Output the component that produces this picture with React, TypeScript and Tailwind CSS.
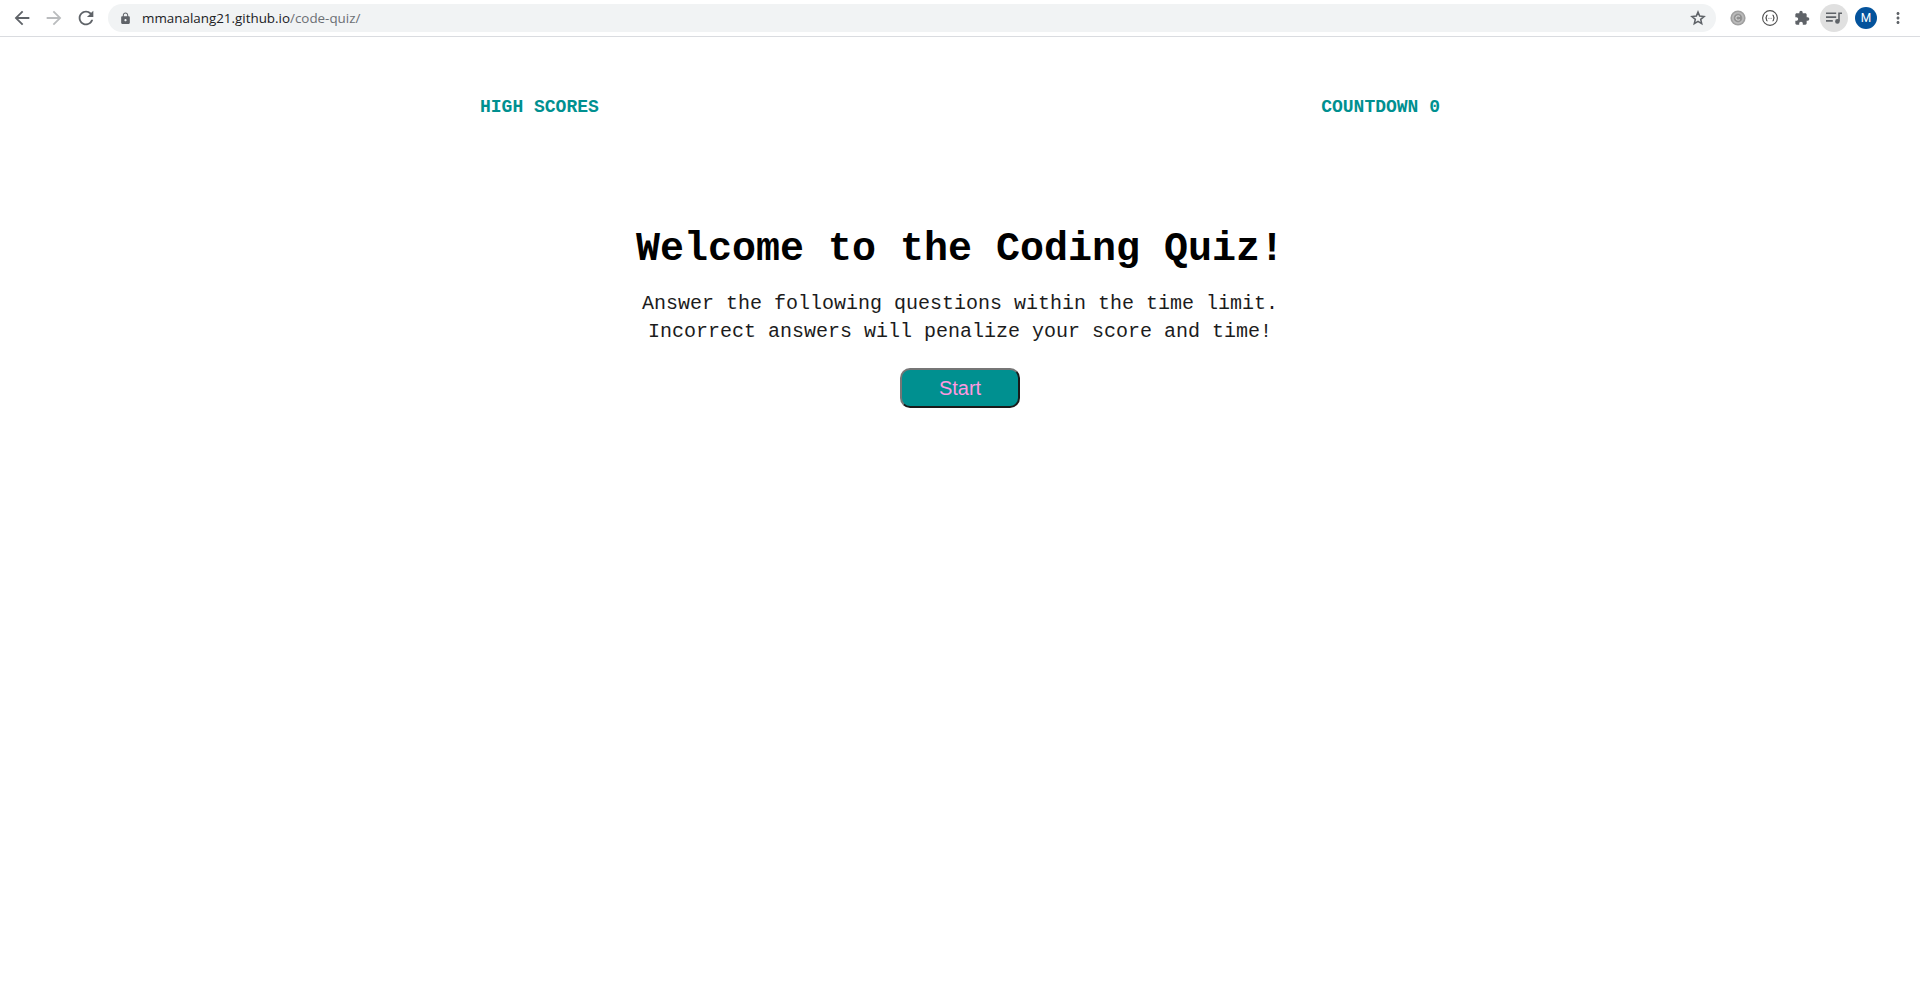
import {
  MdArrowBack,
  MdArrowForward,
  MdRefresh,
  MdLock,
  MdExtension,
  MdMoreVert,
} from "react-icons/md";

function Toolbar() {
  return (
    <div className="flex h-[37px] items-center border-b border-[#dadce0] bg-white pr-1.5 pl-1.5 text-[#5f6368]">
      <div className="flex w-8 justify-center"><MdArrowBack size={22} /></div>
      <div className="flex w-8 justify-center text-[#babcbe]"><MdArrowForward size={22} /></div>
      <div className="flex w-8 justify-center"><MdRefresh size={22} /></div>
      <div className="ml-1.5 flex h-7 flex-1 items-center rounded-full bg-[#f1f3f4] pr-[9px] pl-[11px]">
        <MdLock size={13} />
        <span className="ml-2.5 flex-1 font-['Open_Sans',sans-serif] text-[13.4px] leading-5 text-[#202124]">
          mmanalang21.github.io<span className="text-[#6b6f74]">/code-quiz/</span>
        </span>
        <svg width="18" height="18" viewBox="0 0 24 24" fill="none" stroke="currentColor" strokeWidth="2.1">
          <path d="M12 4.2L14.2 9.5L20 10L15.6 13.8L16.9 19.4L12 16.4L7.1 19.4L8.4 13.8L4 10L9.8 9.5Z" />
        </svg>
      </div>
      <div className="ml-1.5 flex w-8 justify-center">
        <svg width="16" height="16" viewBox="0 0 16 16" fill="none">
          <circle cx="8" cy="8" r="7.6" fill="#a0a0a0" />
          <circle cx="8" cy="8" r="5.2" stroke="#bcbcbc" strokeWidth="1.6" />
          <circle cx="8" cy="8" r="3.8" fill="#8f8f8f" />
          <path d="M9.8 6.6A2.2 2.2 0 1 0 9.8 9.4" stroke="#d0d0d0" strokeWidth="1.2" />
        </svg>
      </div>
      <div className="flex w-8 justify-center">
        <svg width="16" height="16" viewBox="0 0 16 16" fill="none" stroke="#505050">
          <circle cx="8" cy="8" r="7.4" strokeWidth="1.1" />
          <path d="M5.5 5.2Q4.5 5.2 4.5 6.3Q4.5 8 3.4 8Q4.5 8 4.5 9.7Q4.5 10.8 5.5 10.8M10.5 5.2Q11.5 5.2 11.5 6.3Q11.5 8 12.6 8Q11.5 8 11.5 9.7Q11.5 10.8 10.5 10.8" strokeWidth="1.2" />
          <path d="M6.3 8.4h.8M7.6 8.4h.8M8.9 8.4h.8" strokeWidth="0.7" />
        </svg>
      </div>
      <div className="flex w-8 justify-center"><MdExtension size={16} /></div>
      <div className="flex w-8 justify-center">
        <div className="flex size-7 items-center justify-center rounded-full bg-[#e0e0e0]">
          <svg width="16" height="12" viewBox="0 0 16 12" fill="none" stroke="currentColor" strokeWidth="1.6">
            <path d="M0 1.3H10.2M0 5.1H10.2M0 8.9H6.8M13 9.2V1.3H16" />
            <circle cx="11.4" cy="9.4" r="1.5" fill="currentColor" />
          </svg>
        </div>
      </div>
      <div className="flex w-8 justify-center">
        <div className="flex size-[22px] items-center justify-center rounded-full bg-[#04539c] font-[Roboto,sans-serif] text-xs text-white">
          M
        </div>
      </div>
      <div className="flex w-8 justify-center"><MdMoreVert size={18} /></div>
    </div>
  );
}

export default function App() {
  return (
    <div className="min-h-[990px] bg-white font-['Liberation_Mono',monospace] text-black">
      <Toolbar />
      <header className="mx-auto mt-[60px] flex w-[960px] justify-between text-lg leading-5 font-bold text-[#009090]">
        <span>HIGH SCORES</span>
        <span>COUNTDOWN 0</span>
      </header>
      <main className="flex flex-col items-center pt-[110px] text-center">
        <h1 className="text-[40px] leading-[46px] font-bold">Welcome to the Coding Quiz!</h1>
        <p className="mt-[17px] text-xl leading-7 text-[#1c1c1c]">
          Answer the following questions within the time limit.
          <br />
          Incorrect answers will penalize your score and time!
        </p>
        <button className="mt-[22px] h-10 w-[120px] rounded-[10px] border-2 border-t-[#767676] border-r-[#1a1a1a] border-b-[#1a1a1a] border-l-[#767676] bg-[#009090] font-['Liberation_Sans',sans-serif] text-xl leading-6 text-[#ff99e0]">
          Start
        </button>
      </main>
    </div>
  );
}
